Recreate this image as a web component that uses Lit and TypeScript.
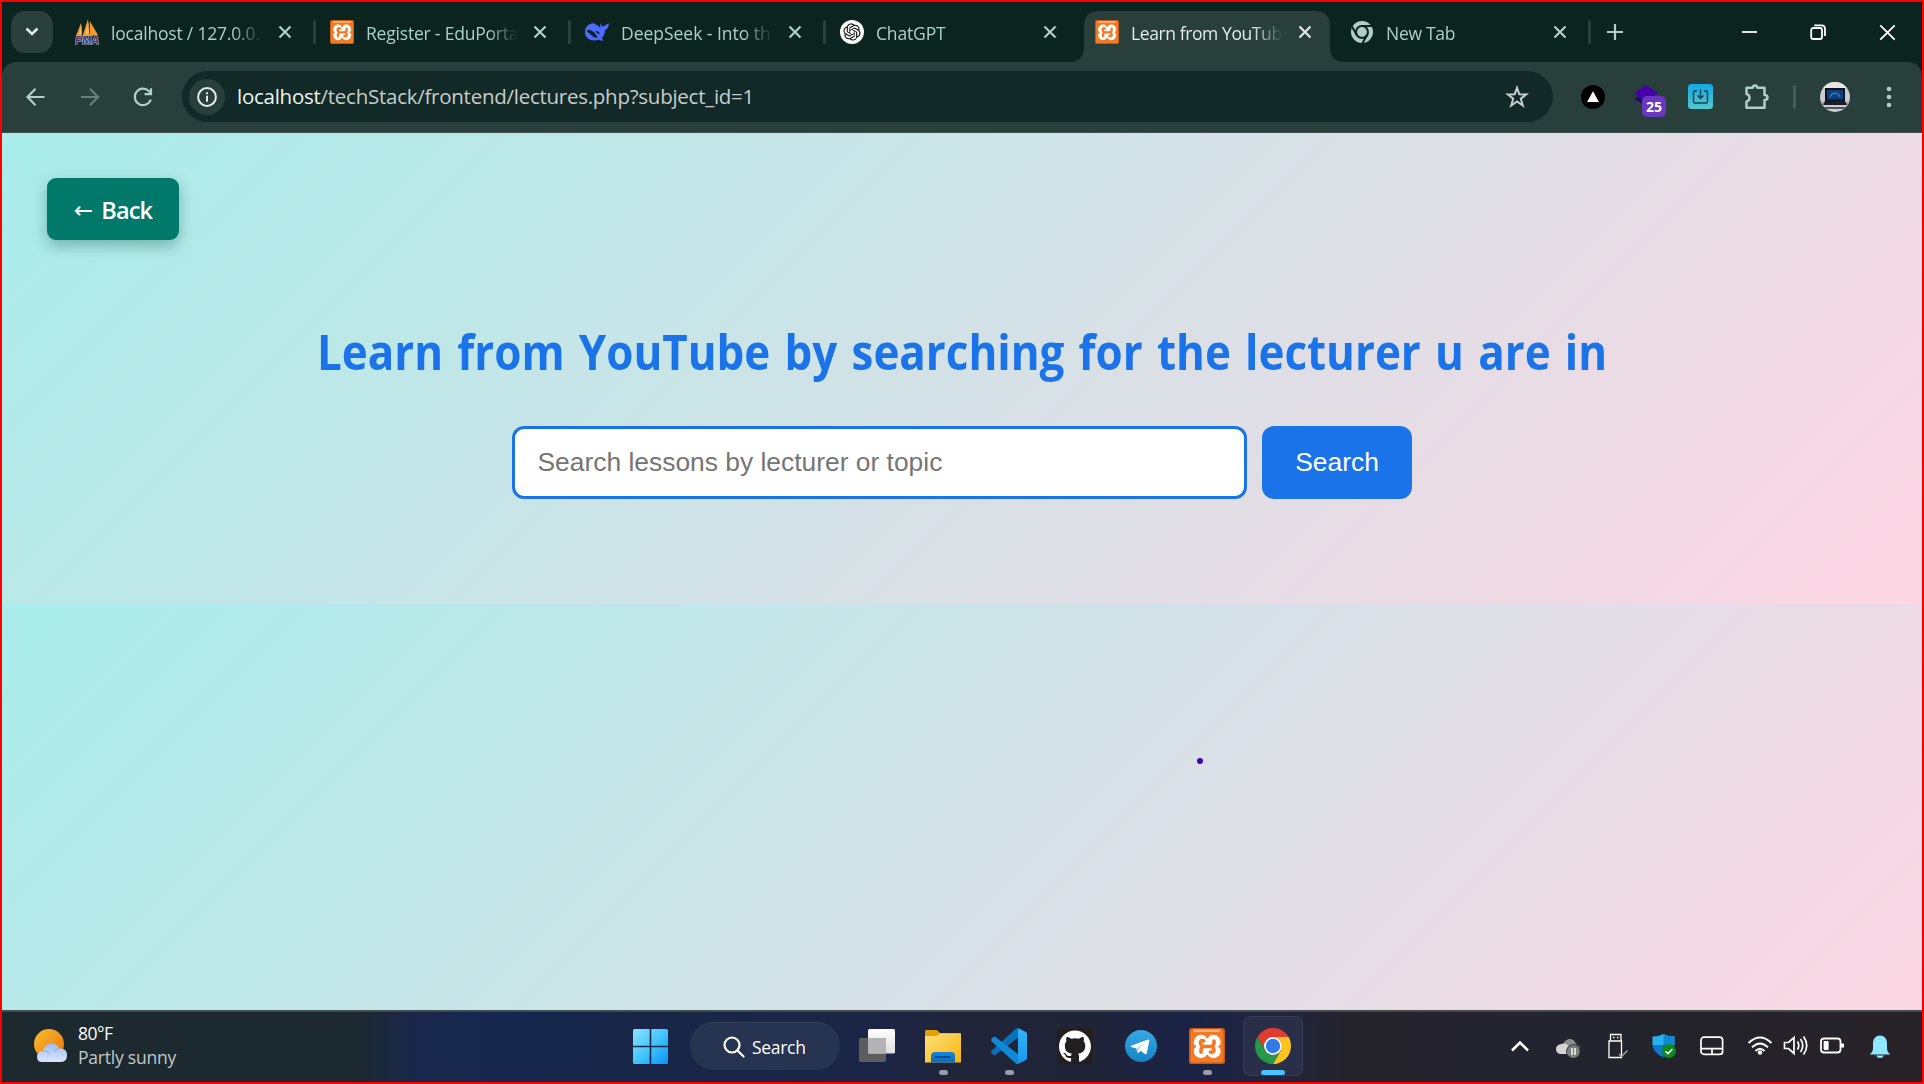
import { LitElement, html, css, svg, TemplateResult } from "lit";
import { customElement, property } from "lit/decorators.js";
import { classMap } from "lit/directives/class-map.js";

/* ---------- icons ---------- */

const closeIcon = html`<svg width="14" height="14" viewBox="0 0 14 14" fill="none" stroke="currentColor" stroke-width="2.2">
  <path d="M1.5 1.5 12.5 12.5M12.5 1.5 1.5 12.5" /></svg>`;

const xamppIcon = (size: number) => html`<svg width=${size} height=${size} viewBox="0 0 36 36">
  <rect width="36" height="36" rx="2.5" fill="#c85a12" />
  <rect x="1.5" y="1.5" width="33" height="33" rx="2" fill="#f37a25" />
  <path d="M4 1.5H32Q31.5 4 29 4H7Q4.500 4 4 1.500Z" fill="#fbb183" />
  <g fill="#fff">
    <circle cx="12" cy="14" r="7.200" /><circle cx="24.500" cy="14" r="7.200" />
    <circle cx="12" cy="23" r="7.200" /><circle cx="24.500" cy="23" r="7.200" />
    <rect x="11" y="11" width="14" height="15" /><rect x="4.800" y="14" width="4" height="2" />
  </g>
  <path d="M5 18.500h2M31.500 18.500h-2M18.200 6.500v3.500M18.200 27v3.500" stroke="#f37a25" stroke-width="2" />
  <path d="M14.800 12.800Q11.500 11.500 11.500 14.800Q12 18.500 15 18.500H21.500Q25 18.500 25 15V13M12 24.200V22.500Q12 18.500 15.500 18.500M21.500 18.500Q24.800 18.500 25 22Q25 25 21.500 24" stroke="#f37a25" stroke-width="3.600" fill="none" stroke-linecap="round" />
</svg>`;

const pmaIcon = html`<svg width="24" height="26" viewBox="0 0 24 26">
  <path d="M1 17 6 4 6.800 17ZM7.500 17 13 0 14.500 17ZM14.800 17V2L23 16Z" fill="#f39a2d" />
  <path d="M4.500 14 6.500 5V16ZM11 15 13.500 3V16Z" fill="#ffc36b" />
  <text x="0" y="25" textLength="24" lengthAdjust="spacingAndGlyphs" font-family="Liberation Sans, sans-serif" font-size="11" font-weight="700" font-style="italic" fill="#3a3870" stroke="#b9b9d8" stroke-width="1.2" paint-order="stroke">PMA</text>
</svg>`;

const deepseekIcon = html`<svg width="24" height="20" viewBox="0 0 24 20">
  <path d="M15.500 1.200C16 3.500 17.500 4.800 19 4.600 19.500 2.800 21.500 3 23.800 1.200 23.800 5 22.300 7 20.300 7.700 20 11.500 18.800 14 16.600 16L18.700 18.200C16.500 19 14.500 18.200 13.300 17.800 7 20 0 17 0 10 0 4 5 1 9 1.300 10 2.600 13 2.800 15.600 6.500 15.200 4.500 14.800 2.500 15.500 1.200Z" fill="#4d6bfe" />
  <path d="M2.300 8C5.500 7 9 9.500 11.500 13.500 12.500 15 13.300 15.500 12 15.600 8 16.200 6 12 2.300 10Z" fill="#0b2420" />
  <path d="M10.500 9.500C11.800 8 14.500 9.500 14.700 12.300 12.500 12 11.500 11 10.500 9.500Z" fill="#0b2420" />
</svg>`;

const openaiIcon = html`<svg width="24" height="24" viewBox="0 0 24 24">
  <circle cx="12" cy="12" r="12" fill="#fff" />
  <g transform="translate(3.400 3.400) scale(.716)">
    <path fill="#111" d="M22.2819 9.8211a5.9847 5.9847 0 0 0-.5157-4.9108 6.0462 6.0462 0 0 0-6.5098-2.9A6.0651 6.0651 0 0 0 4.9807 4.1818a5.9847 5.9847 0 0 0-3.9977 2.9 6.0462 6.0462 0 0 0 .7427 7.0966 5.98 5.98 0 0 0 .511 4.9107 6.051 6.051 0 0 0 6.5146 2.9001A5.9847 5.9847 0 0 0 13.2599 24a6.0557 6.0557 0 0 0 5.7718-4.2058 5.9894 5.9894 0 0 0 3.9977-2.9001 6.0557 6.0557 0 0 0-.7475-7.0729zm-9.022 12.6081a4.4755 4.4755 0 0 1-2.8764-1.0408l.1419-.0804 4.7783-2.7582a.7948.7948 0 0 0 .3927-.6813v-6.7369l2.02 1.1686a.071.071 0 0 1 .038.052v5.5826a4.504 4.504 0 0 1-4.4945 4.4944zm-9.6607-4.1254a4.4708 4.4708 0 0 1-.5346-3.0137l.142.0852 4.783 2.7582a.7712.7712 0 0 0 .7806 0l5.8428-3.3685v2.3324a.0804.0804 0 0 1-.0332.0615L9.74 19.9502a4.4992 4.4992 0 0 1-6.1408-1.6464zM2.3408 7.8956a4.485 4.485 0 0 1 2.3655-1.9728V11.6a.7664.7664 0 0 0 .3879.6765l5.8144 3.3543-2.0201 1.1685a.0757.0757 0 0 1-.071 0l-4.8303-2.7865A4.504 4.504 0 0 1 2.3408 7.872zm16.5963 3.8558L13.1038 8.364 15.1192 7.2a.0757.0757 0 0 1 .071 0l4.8303 2.7913a4.4944 4.4944 0 0 1-.6765 8.1042v-5.6772a.79.79 0 0 0-.407-.667zm2.0107-3.0231l-.142-.0852-4.7735-2.7818a.7759.7759 0 0 0-.7854 0L9.409 9.2297V6.8974a.0662.0662 0 0 1 .0284-.0615l4.8303-2.7866a4.4992 4.4992 0 0 1 6.6802 4.66zM8.3065 12.863l-2.02-1.1638a.0804.0804 0 0 1-.038-.0567V6.0742a4.4992 4.4992 0 0 1 7.3757-3.4537l-.142.0805L8.704 5.459a.7948.7948 0 0 0-.3927.6813zm1.0976-2.3654l2.602-1.4998 2.6069 1.4998v2.9994l-2.5974 1.4997-2.6067-1.4997Z" />
  </g>
</svg>`;

const chromeMono = html`<svg width="22" height="22" viewBox="0 0 48 48">
  <circle cx="24" cy="24" r="24" fill="#b1cec8" />
  <g stroke="#0b2420" stroke-width="4.500" fill="none">
    <circle cx="24" cy="24" r="13" />
    <path d="M24 11H46M35.300 30.500 24.500 49M12.700 30.500 2 12" />
  </g>
</svg>`;

const chromeIcon = html`<svg width="36" height="36" viewBox="0 0 48 48">
  <path d="M24 12H44.780A24 24 0 0 0 3.220 12L13.610 30A12 12 0 0 1 24 12Z" fill="#e33b2e" />
  <path d="M44.780 12A24 24 0 0 1 24 48L34.390 30A12 12 0 0 0 24 12Z" fill="#fcc31e" />
  <path d="M3.220 12A24 24 0 0 0 24 48L34.390 30A12 12 0 0 1 13.610 30Z" fill="#279847" />
  <circle cx="24" cy="24" r="12" fill="#fff" />
  <circle cx="24" cy="24" r="9.600" fill="#2f7bea" />
</svg>`;

const windowsIcon = html`<svg width="35" height="35" viewBox="0 0 35 35">
  <defs><linearGradient id="w" x1="0" y1="0" x2="35" y2="35" gradientUnits="userSpaceOnUse">
    <stop stop-color="#8be2fd" /><stop offset=".5" stop-color="#45c6fb" /><stop offset="1" stop-color="#0a93f8" />
  </linearGradient></defs>
  <path fill="url(#w)" d="M1.500 0H16.700V16.700H0V1.500Q0 0 1.500 0ZM18.300 0H33.500Q35 0 35 1.500V16.700H18.300ZM0 18.300H16.700V35H1.500Q0 35 0 33.500ZM18.300 18.300H35V33.500Q35 35 33.500 35H18.300Z" />
</svg>`;

const taskViewIcon = html`<svg width="36" height="34" viewBox="0 0 36 34">
  <defs><linearGradient id="t" x1="0" y1="0" x2="0" y2="1"><stop stop-color="#fff" /><stop offset="1" stop-color="#dedede" /></linearGradient></defs>
  <rect x="0" y="9" width="27" height="24" rx="1.500" fill="#5d5d60" />
  <rect x="9" y="0" width="27" height="24.500" rx="1.500" fill="url(#t)" />
  <path d="M9 9H27V24.500H10.500Q9 24.500 9 23Z" fill="#b3b3b5" />
</svg>`;

const folderIcon = html`<svg width="36" height="33" viewBox="0 0 36 33">
  <defs>
    <linearGradient id="f" x1="0" y1="0" x2="1" y2="1"><stop stop-color="#ffe07c" /><stop offset="1" stop-color="#f8b60c" /></linearGradient>
    <linearGradient id="fb" x1="0" y1="0" x2="0" y2="1"><stop stop-color="#1685dc" /><stop offset="1" stop-color="#0b6cc0" /></linearGradient>
  </defs>
  <path d="M0 1.500Q0 0 1.500 0H11Q12 0 13 1L15 3H34.500Q36 3 36 4.500V8H0Z" fill="#e2a008" />
  <path d="M0 6H11L15 3.500H36V32.500H0Z" fill="url(#f)" />
  <path d="M6 32.500V26Q6 22 10 22H26Q30 22 30 26V32.500Z" fill="url(#fb)" />
  <path d="M10.500 27H25" stroke="#084d92" stroke-width="2" stroke-linecap="round" />
</svg>`;

const vscodeIcon = html`<svg width="36" height="36" viewBox="0 0 24 24">
  <defs>
    <clipPath id="vr"><rect x="18" width="6" height="24" /></clipPath>
    <linearGradient id="vg" x1="0" y1="0" x2="0" y2="1"><stop stop-color="#32b5f6" /><stop offset="1" stop-color="#1b96ee" /></linearGradient>
  </defs>
  <path fill="#0a70b8" d="M23.150 2.587L18.210.210a1.494 1.494 0 0 0-1.705.290l-9.460 8.630-4.120-3.128a.999.999 0 0 0-1.276.057L.327 7.261A1 1 0 0 0 .326 8.740L3.899 12 .326 15.260a1 1 0 0 0 .001 1.479L1.650 17.940a.999.999 0 0 0 1.276.057l4.120-3.128 9.460 8.630a1.492 1.492 0 0 0 1.704.290l4.942-2.377A1.500 1.500 0 0 0 24 20.060V3.939a1.500 1.500 0 0 0-.850-1.352zm-5.146 14.861L10.826 12l7.178-5.448v10.896z" />
  <path d="M1.650 6.060Q2.300 5.500 2.930 6L18 17.450V23.850Q17.200 24 16.500 23.500L.33 8.740Q-.3 8 .33 7.260Z" fill="#0f8ad8" />
  <path d="M18 .150 23.150 2.587Q24 3 24 3.939V20.060Q24 21 23.150 21.400L18 23.850Z" fill="url(#vg)" clip-path="url(#vr)" />
</svg>`;

const githubIcon = html`<svg width="36" height="36" viewBox="0 0 36 36">
  <rect width="36" height="36" fill="#231f20" />
  <path transform="translate(2 2.500) scale(2)" fill="#fff" d="M8 0C3.580 0 0 3.580 0 8c0 3.540 2.290 6.530 5.470 7.590.4.070.55-.17.55-.38 0-.19-.01-.82-.01-1.490-2.010.37-2.530-.49-2.690-.94-.09-.23-.48-.94-.82-1.130-.28-.15-.68-.52-.01-.53.63-.01 1.080.58 1.230.82.72 1.210 1.870.87 2.330.66.07-.52.28-.87.51-1.070-1.780-.2-3.640-.89-3.640-3.950 0-.87.31-1.590.82-2.150-.08-.2-.36-1.020.08-2.120 0 0 .67-.21 2.200.82.64-.18 1.320-.27 2-.27s1.360.09 2 .27c1.530-1.040 2.200-.82 2.200-.82.44 1.100.16 1.920.08 2.120.51.56.82 1.270.82 2.150 0 3.070-1.870 3.750-3.650 3.950.29.25.54.73.54 1.480 0 1.070-.01 1.930-.01 2.200 0 .21.15.46.55.38A8.010 8.010 0 0 0 16 8c0-4.420-3.580-8-8-8z" />
</svg>`;

const telegramIcon = html`<svg width="32" height="32" viewBox="0 0 32 32">
  <defs><linearGradient id="g" x1="0" y1="0" x2="0" y2="1"><stop stop-color="#37a9e6" /><stop offset="1" stop-color="#1484c4" /></linearGradient></defs>
  <circle cx="16" cy="16" r="16" fill="url(#g)" />
  <path d="M6 15.800 23 9.600Q24.400 9.300 24.200 11L21.800 23.200Q21.400 24.800 20 24L15.600 20.800 13.300 23Q12.700 23.400 12.500 22.500L11.300 18.600 6.200 17Q5 16.400 6 15.800Z" fill="#fff" />
  <path d="M11.300 18.600 20 12.800 13.800 19.300 12.800 22.800Z" fill="#b5d3e6" />
</svg>`;

const weatherIcon = html`<svg width="34" height="34" viewBox="0 0 34 34">
  <defs>
    <linearGradient id="s" x1="0" y1="0" x2="1" y2="1"><stop stop-color="#f5c02c" /><stop offset="1" stop-color="#f0700f" /></linearGradient>
    <linearGradient id="c" x1="0" y1="0" x2="0" y2="1"><stop stop-color="#9dbdf1" /><stop offset="1" stop-color="#dbe7fb" /></linearGradient>
  </defs>
  <circle cx="15" cy="15" r="15" fill="url(#s)" />
  <path d="M8 33Q3 33 3 27.500 3 22.500 9 22 11 14.500 18 14.500 23 14.500 25 19.500 33 18.500 33 26.500 33 33 27 33Z" fill="url(#c)" />
  <path d="M9 22Q14 21.500 16 25M25 19.500Q21 20 19.500 23" stroke="#89a8e4" stroke-width="1" fill="none" />
</svg>`;

const trayIcons: TemplateResult[] = [
  svg`<path d="M6 20.500 14 12.500 22 20.500" stroke-width="2.600" />`,
  svg`<g stroke="none"><path d="M9 17Q9 10 15 9 20 8.500 22 14L26 17V22H9Z" fill="#8d8d8d" /><path d="M6 24Q2 23 2 19 2 15 7 14 12 12 16 17L20 19V24Z" fill="#d4d4d4" /><circle cx="19.300" cy="21.500" r="7.200" fill="#26262e" /><circle cx="19.300" cy="21.500" r="6.500" fill="#7d7d7d" /></g><path d="M18 18V25M21 18V25" stroke-width="1.400" />`,
  svg`<path d="M8.500 10.500V4.500H19V10.500M7 11H19.500V27.500H7Z" stroke-width="1.300" /><path d="M11 7.500h1.500M15 7.500h1.500" stroke-width="1.600" /><path d="M17 24 19.500 26.500 25.500 20.500" stroke="#aaa" stroke-width="1.300" />`,
  svg`<g stroke="none"><path d="M2.500 6.500Q9 6.500 13.500 4 18 6.500 24.500 6.500V15H2.500Z" fill="#27b3ee" /><path d="M13.500 4Q18 6.500 24.500 6.500V15H13.500Z" fill="#1287d6" /><path d="M2.500 15H13.500V27.500Q3.500 23.500 2.500 15Z" fill="#1078d0" /><path d="M13.500 15H24.500Q23 24 13.500 27.500Z" fill="#0b5cad" /><circle cx="19" cy="21" r="7" fill="#0c8a1c" /></g><path d="M15.500 21.200 18 23.600 22.500 19" stroke-width="1.500" />`,
  svg`<rect x="3" y="7.200" width="21.600" height="17.200" rx="3" stroke-width="1.700" /><path d="M3 18.700H24.600M14 18.700V24.200" stroke-width="1.700" />`,
  svg`<path d="M2.500 13Q14 2 25.500 13M6 17.300Q14 9.500 22 17.300M9.500 21Q14 16.500 18.500 21" stroke-width="1.900" /><circle cx="14" cy="22.500" r="2.200" fill="#fff" stroke="none" />`,
  svg`<path d="M2.500 12.500H6.500L12 7.500V23.500L6.500 18.500H2.500ZM15.500 11.500Q18 15.500 15.500 19.500M18.500 9Q23 15.500 18.500 22M21.500 6.500Q28 15.500 21.500 24.500" stroke-width="1.700" />`,
  svg`<rect x="3" y="8.500" width="19.500" height="14" rx="3" stroke-width="1.800" /><rect x="5.600" y="11" width="5" height="9" rx="1" fill="#fff" stroke="none" /><path d="M24.500 13.500V17.500" stroke-width="3" />`,
  svg`<g fill="#8fe6ff" stroke="none"><path d="M4 24Q7 22 7 18V13Q7.500 5.500 14 5.500 20.500 5.500 21 13V18Q21 22 24 24V24.500H4Z" /><path d="M10 25.500H18Q17 28 14 28 11 28 10 25.500Z" /></g>`,
];

/* ---------- tabs ---------- */

interface Tab { title: string; icon: TemplateResult; spacing: number; active?: boolean; noSep?: boolean; }

const tabs: Tab[] = [
  { title: "localhost / 127.0.0.", icon: pmaIcon, spacing: -0.2 },
  { title: "Register - EduPorta", icon: xamppIcon(24), spacing: -0.2 },
  { title: "DeepSeek - Into th", icon: deepseekIcon, spacing: -0.02 },
  { title: "ChatGPT", icon: openaiIcon, spacing: -0.15, noSep: true },
  { title: "Learn from YouTub", icon: xamppIcon(24), spacing: -0.4, active: true, noSep: true },
  { title: "New Tab", icon: chromeMono, spacing: -0.3 },
];

@customElement("browser-tab")
class BrowserTab extends LitElement {
  @property({ attribute: false }) tab!: Tab;
  static styles = css`
    :host { display: block; width: 255px; height: 60px; flex: none; }
    .tab { box-sizing: border-box; height: 60px; position: relative; display: flex; align-items: center; padding: 0 0 0 14px; color: #afcfc9; }
    .active { color: #e1ebe9; }
    .shape { position: absolute; left: -12px; top: 9px; width: 277px; height: 51px; }
    .icon { width: 24px; height: 60px; display: flex; align-items: center; justify-content: center; position: relative; }
    .title { position: relative; margin-left: 12px; width: 152px; overflow: hidden; white-space: nowrap; font-size: 17.5px; line-height: 30px; padding-top: 1.500px;
      -webkit-mask-image: linear-gradient(90deg, #000 80%, transparent 100%); mask-image: linear-gradient(90deg, #000 80%, transparent 100%); }
    .close { position: relative; margin-left: 15px; display: flex; }
    .sep { position: absolute; right: 0; top: 18px; width: 3px; height: 24px; border-radius: 1.500px; background: #29413d; }
  `;
  render() {
    const t = this.tab;
    return html`<div class=${classMap({ tab: true, active: !!t.active })}>
      ${t.active ? html`<svg class="shape" viewBox="0 0 277 51"><path fill="#283f3b" d="M0 51Q15 51 15 36V15Q15 0 30 0H246Q261 0 261 15V36Q261 51 276 51Z" /></svg>` : null}
      <div class="icon">${t.icon}</div>
      <div class="title" style="letter-spacing:${t.spacing}px">${t.title}</div>
      <div class="close">${closeIcon}</div>
      ${t.noSep ? null : html`<div class="sep"></div>`}
    </div>`;
  }
}

@customElement("task-bar")
class TaskBar extends LitElement {
  static styles = css`
    :host { display: block; }
    .bar { box-sizing: border-box; height: 72px; border-top: 2px solid #434d50; padding-bottom: 2px; display: flex; align-items: center; color: #fff; font-size: 17.5px;
      background: linear-gradient(90deg, #1c292e 0, #1c292e 350px, #18274a 410px, #17264d 500px, #192648 700px, #1c2546 880px, #212539 960px, #202438 1090px, #1a2346 1180px, #20243e 1270px, #25232b 1350px, #232430 1520px, #24232b 1700px, #272228 1918px); }
    .weather { width: 599px; padding-left: 32px; display: flex; align-items: center; gap: 10px; }
    .lines { display: flex; flex-direction: column; line-height: 24px; margin-top: -2px; }
    .temp { letter-spacing: -0.500px; }
    .cond { color: #c3c7c9; letter-spacing: -0.220px; }
    .start { display: flex; width: 35px; margin-right: 22px; }
    .pill { box-sizing: border-box; width: 150px; height: 48px; border-radius: 24px; background: #263452; border-top: 1px solid #334060; display: flex; align-items: center; padding-left: 33px; gap: 7px; margin-right: 4px; }
    .pill span { letter-spacing: -0.300px; }
    .app { width: 60px; height: 60px; margin: 0 3px; position: relative; display: flex; align-items: center; justify-content: center; box-sizing: border-box; border-radius: 7px; border: 1px solid transparent; }
    .app.on { background: #2a2f49; border-color: #383c53; }
    .mark { position: absolute; left: 50%; bottom: 0; width: 9px; height: 5px; margin-left: -4.500px; border-radius: 3px; background: #9a9cab; }
    .on .mark { width: 24px; margin-left: -12px; background: #4cc2ff; }
    .tray { display: flex; margin-left: auto; margin-right: 18px; align-items: center; }
    .cell { width: 48px; display: flex; justify-content: center; }
    .cell svg { flex: none; }
    .cell.n { width: 24px; }
  `;
  render() {
    const apps: [TemplateResult, string][] = [
      [taskViewIcon, ""], [folderIcon, "run"], [vscodeIcon, "run"], [githubIcon, ""],
      [telegramIcon, ""], [xamppIcon(36), "run"], [chromeIcon, "on"],
    ];
    return html`<div class="bar">
      <div class="weather">${weatherIcon}<div class="lines"><span class="temp">80°F</span><span class="cond">Partly sunny</span></div></div>
      <div class="start">${windowsIcon}</div>
      <div class="pill">
        <svg width="22" height="22" viewBox="0 0 22 22" fill="none" stroke="#fff" stroke-width="2.200"><circle cx="9" cy="9" r="7.500" /><path d="M14.300 14.300 20.500 20.500" stroke-linecap="round" /></svg>
        <span>Search</span>
      </div>
      ${apps.map(([icon, state]) => html`<div class=${classMap({ app: true, on: state === "on" })}>${icon}${state ? html`<div class="mark"></div>` : null}</div>`)}
      <div class="tray">
        ${trayIcons.map((i, k) => html`<div class=${classMap({ cell: true, n: k === 6 })}>
          <svg width="28" height="32" viewBox="0 0 28 32" fill="none" stroke="#fff">${i}</svg></div>`)}
      </div>
    </div>`;
  }
}

@customElement("app-root")
class AppRoot extends LitElement {
  static styles = css`
    :host { display: block; font-family: "Open Sans", "Noto Sans", sans-serif; }
    .screen { box-sizing: border-box; width: 1924px; height: 1084px; border: 2px solid #f00; display: flex; flex-direction: column; overflow: hidden; background: #0b2420; }
    .strip { height: 60px; display: flex; align-items: center; }
    .tabsearch { width: 42px; height: 42px; border-radius: 14px; background: #283f3b; margin: 0 8px 0 9px; display: flex; align-items: center; justify-content: center; }
    .plus { display: flex; margin-left: 16px; color: #b1cec8; }
    .win { margin-left: auto; display: flex; padding-bottom: 1px; }
    .win svg { width: 69px; height: 20px; }
    .toolbar { box-sizing: border-box; height: 71px; background: #283f3b; border-bottom: 1px solid #3d504d; border-radius: 14px 14px 0 0; display: flex; align-items: center; color: #b1cec8; padding-bottom: 1px; }
    .nav { display: flex; width: 180px; box-sizing: border-box; padding-left: 22px; gap: 29.500px; }
    .omni { height: 51px; width: 1371px; border-radius: 26px; background: #122a27; display: flex; align-items: center; box-sizing: border-box; padding: 0 24px 0 7px; }
    .info { width: 36px; height: 36px; border-radius: 50%; background: #283f3b; display: flex; align-items: center; justify-content: center; margin-right: 12px; }
    .url { flex: 1; font-size: 20.500px; letter-spacing: -0.260px; color: #c7cdcc; padding-bottom: 2px; }
    .host { color: #f0f4f3; }
    .ext { display: flex; align-items: center; flex: 1; padding-left: 27.500px; }
    .stack { display: flex; position: relative; width: 36px; height: 36px; margin: 0 19px 0 28.500px; }
    .badge { position: absolute; left: 9px; top: 17px; width: 24px; height: 21px; border-radius: 5px; background: #6a37bf; color: #fff; font-size: 14px; line-height: 22px; font-weight: 700; text-align: center; }
    .puzzle { margin-left: 29.500px; }
    .menu { margin-left: 36px; }
    .vsep { width: 3px; height: 24px; border-radius: 1.500px; background: #455c58; margin: 0 24px 0 22.500px; }
    .page { flex: 1; position: relative; display: flex; flex-direction: column; align-items: center; background: linear-gradient(135deg, #a8edea, #fed6e3) 0 0 / 100% 471px; }
    .back { align-self: flex-start; margin: 45px 0 0 45px; width: 132px; height: 62px; border-radius: 9px; background: #00796b; color: #fff; font: 600 23.500px "Open Sans", sans-serif; letter-spacing: -0.800px; border: 0; padding: 2px 0 0 0; display: flex; align-items: center; justify-content: center; gap: 9px; box-shadow: 0 6px 15px rgba(0, 77, 64, .35); }
    .arrow { font: 400 23px "DejaVu Sans", sans-serif; line-height: 24px; }
    h1 { margin: 79px 0 0; font-size: 48px; line-height: 66px; font-weight: 700; color: #1a73e8; white-space: nowrap; word-spacing: 3.100px; transform: scaleX(.915); }
    form { display: flex; gap: 15px; margin-top: 41px; }
    input { box-sizing: border-box; width: 735px; height: 73px; border: 3px solid #1a73e8; border-radius: 12px; background: #fff; padding: 0 22.500px; font: 26.400px "Liberation Sans", Arial, sans-serif; }
    input::placeholder { color: #757575; opacity: 1; }
    .go { width: 150px; height: 73px; border: 0; border-radius: 12px; background: #1a73e8; color: #fff; font: 26.400px "Liberation Sans", Arial, sans-serif; padding: 0; }
    .dot { position: absolute; left: 1195.300px; top: 625.300px; width: 6px; height: 6px; border-radius: 50%; background: #3f00b8; }
  `;
  render() {
    return html`<div class="screen">
      <div class="strip">
        <div class="tabsearch"><svg width="14" height="10" viewBox="0 0 14 10" fill="none" stroke="#e1ebe9" stroke-width="2.600"><path d="M1.500 1.500 7 7 12.500 1.500" /></svg></div>
        ${tabs.map((t) => html`<browser-tab .tab=${t}></browser-tab>`)}
        <div class="plus"><svg width="16" height="16" viewBox="0 0 16 16" stroke="currentColor" stroke-width="2.200"><path d="M8 0V16M0 8H16" /></svg></div>
        <div class="win">
          <svg viewBox="0 0 69 20" stroke="#fff" stroke-width="1.800"><path d="M27 10H42" /></svg>
          <svg viewBox="0 0 69 20" fill="none" stroke="#fff" stroke-width="1.800"><rect x="27.200" y="6" width="10.800" height="11" rx="2" /><path d="M30.200 3.300H37.500Q41 3.300 41 6.800V14" /></svg>
          <svg viewBox="0 0 69 20" stroke="#fff" stroke-width="1.800"><path d="M27.300 3.300 41.700 17.700M41.700 3.300 27.300 17.700" /></svg>
        </div>
      </div>
      <div class="toolbar">
        <div class="nav">
          <svg width="24" height="24" viewBox="0 0 24 24" fill="none" stroke="currentColor" stroke-width="2.200"><path d="M20.500 12H4M11.500 3.800 3.500 12 11.500 20.200" /></svg>
          <svg width="24" height="24" viewBox="0 0 24 24" fill="none" stroke="#687f7b" stroke-width="2.200"><path d="M3 12H19.500M12 3.800 20 12 12 20.200" /></svg>
          <svg width="24" height="24" viewBox="0 0 24 24" fill="none" stroke="currentColor" stroke-width="2.200"><path d="M19.800 14.500A8.200 8.200 0 1 1 18 6.300L20.500 9M20 3.200V9.200H13.500" /></svg>
        </div>
        <div class="omni">
          <div class="info"><svg width="20" height="20" viewBox="0 0 20 20" fill="none" stroke="#e1ebe9" stroke-width="2"><circle cx="10" cy="10" r="8.900" /><path d="M10 8.800V14.800M10 5.200V7.200" /></svg></div>
          <div class="url"><span class="host">localhost</span>/techStack/frontend/lectures.php?subject_id=1</div>
          <svg width="24" height="24" viewBox="0 0 24 24" fill="none" stroke="#c7cdcc" stroke-width="2"><path d="M12 2.800 14.300 9.200 21.300 9.400 15.800 13.700 17.800 20.500 12 16.500 6.200 20.500 8.200 13.700 2.700 9.400 9.700 9.200Z" /></svg>
        </div>
        <div class="ext">
          <svg width="24" height="24" viewBox="0 0 24 24"><circle cx="12" cy="12" r="12" fill="#000" /><path d="M12 6.300 18 17H6Z" fill="#fff" /></svg>
          <div class="stack">
            <svg width="36" height="36" viewBox="0 0 36 36"><path d="M1 20 13 27 25 20 13 14Z" fill="#210a6b" /><path d="M1 14 13 6 25 14 13 23Z" fill="#4602a8" /></svg>
            <div class="badge">25</div>
          </div>
          <svg width="25" height="25" viewBox="0 0 25 25"><defs><linearGradient id="d" x1="0" y1="0" x2="0" y2="1"><stop stop-color="#12a9e8" /><stop offset="1" stop-color="#54c8cc" /></linearGradient></defs>
            <rect width="25" height="25" rx="3.500" fill="url(#d)" /><path d="M9 7H7Q5.500 7 5.500 8.500V17.500Q5.500 19 7 19H18Q19.500 19 19.500 17.500V8.500Q19.500 7 18 7H16M12.500 5.500V14.500M9.500 11.500 12.500 14.500 15.500 11.500" fill="none" stroke="#1c3f4e" stroke-width="1.500" /></svg>
          <svg class="puzzle" width="28" height="28" viewBox="0 0 28 28" fill="none" stroke="currentColor" stroke-width="2.500"><path d="M3.500 4.700H9.800Q10 2.500 12 2.500T14.200 4.700H21.500V12Q24.500 12 24.500 14.500T21.500 17V24.800H3.500V18.500Q6.500 18 6.500 14.800T3.500 11Z" stroke-linejoin="round" /></svg>
          <div class="vsep"></div>
          <svg width="30" height="30" viewBox="0 0 30 30"><defs><clipPath id="av"><circle cx="15" cy="15" r="15" /></clipPath></defs>
            <g clip-path="url(#av)"><rect width="30" height="30" fill="#c9ccd0" /><rect width="30" height="6" fill="#e8e6df" /><rect x="0" y="20" width="30" height="3" fill="#9a9fa6" /><rect x="5" y="6" width="20" height="13" fill="#0b1222" /><rect x="7" y="8" width="16" height="9.500" fill="#0e3e7c" /><path d="M10 15 12 12 15 11 18 12 20 15" stroke="#3478b8" fill="none" stroke-width="1.500" /><path d="M5 19H25L27 23H3Z" fill="#1b1e25" /><rect y="25" width="30" height="2" fill="#50555c" /></g></svg>
          <svg class="menu" width="6" height="24" viewBox="0 0 6 24" fill="currentColor"><circle cx="3" cy="4" r="2.300" /><circle cx="3" cy="12" r="2.300" /><circle cx="3" cy="20" r="2.300" /></svg>
        </div>
      </div>
      <div class="page">
        <button class="back"><span class="arrow">←</span><span>Back</span></button>
        <h1>Learn from YouTube by searching for the lecturer u are in</h1>
        <form @submit=${(e: Event) => e.preventDefault()}>
          <input placeholder="Search lessons by lecturer or topic" />
          <button class="go">Search</button>
        </form>
        <div class="dot"></div>
      </div>
      <task-bar></task-bar>
    </div>`;
  }
}
